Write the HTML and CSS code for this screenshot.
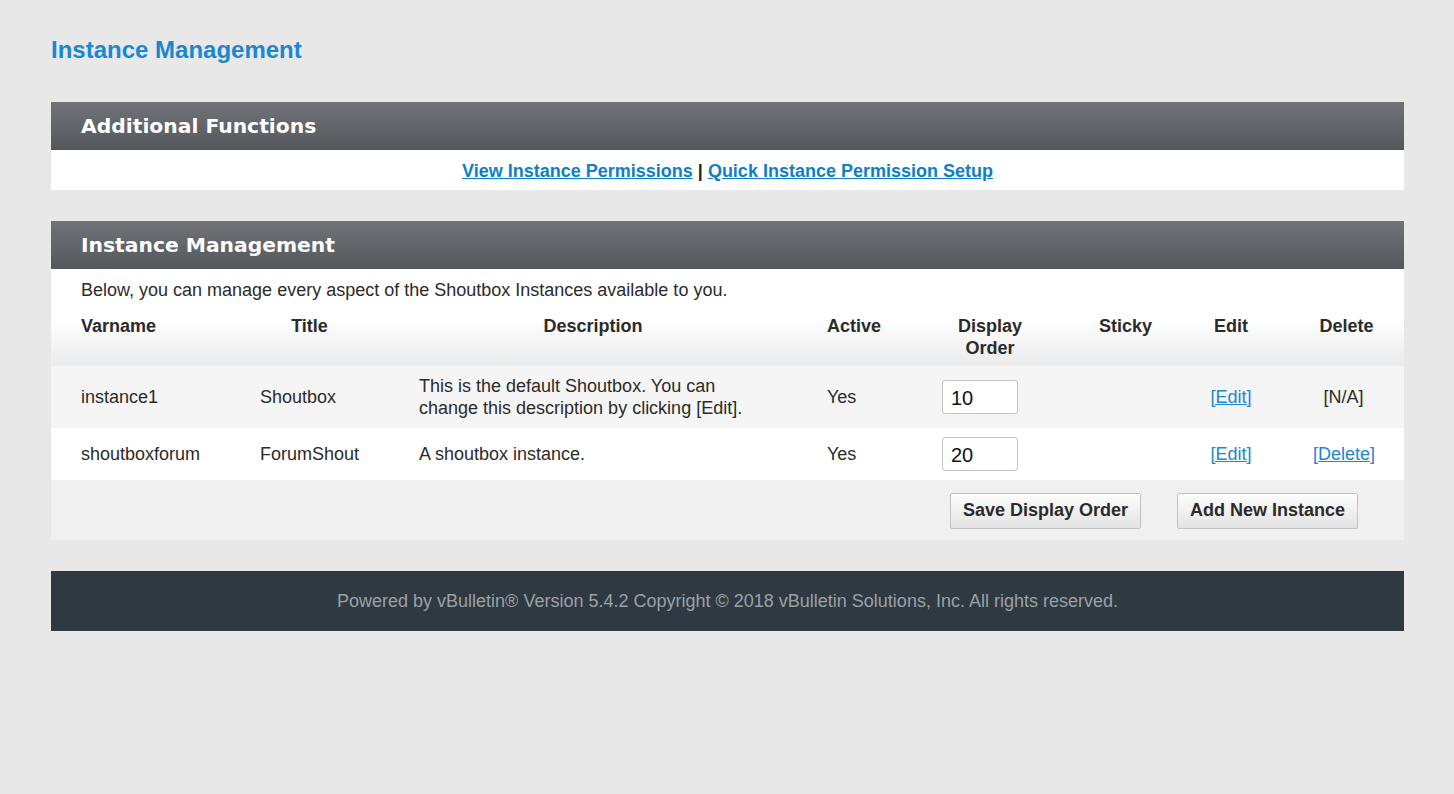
FILE: index.html
```html
<!DOCTYPE html>
<html>
<head>
<meta charset="utf-8">
<title>Instance Management</title>
<link rel="stylesheet" href="styles.css">
</head>
<body>
<div class="page">
  <h1 class="page-title">Instance Management</h1>

  <section class="panel">
    <h2 class="panel-head">Additional Functions</h2>
    <div class="links-row">
      <a href="#">View Instance Permissions</a> <span class="sep">|</span> <a href="#">Quick Instance Permission Setup</a>
    </div>
  </section>

  <section class="panel">
    <h2 class="panel-head">Instance Management</h2>
    <div class="intro-block">
      <p class="intro">Below, you can manage every aspect of the Shoutbox Instances available to you.</p>
      <table class="grid">
        <colgroup>
          <col class="c1"><col class="c2"><col class="c3"><col class="c4"><col class="c5"><col class="c6"><col class="c7"><col class="c8">
        </colgroup>
        <thead>
          <tr>
            <th class="left">Varname</th>
            <th>Title</th>
            <th>Description</th>
            <th>Active</th>
            <th>Display Order</th>
            <th>Sticky</th>
            <th>Edit</th>
            <th class="del">Delete</th>
          </tr>
        </thead>
        <tbody>
          <tr class="alt">
            <td>instance1</td>
            <td>Shoutbox</td>
            <td>This is the default Shoutbox. You can change this description by clicking [Edit].</td>
            <td>Yes</td>
            <td><input class="order" type="text" value="10"></td>
            <td></td>
            <td class="center"><a href="#">[Edit]</a></td>
            <td class="center">[N/A]</td>
          </tr>
          <tr>
            <td>shoutboxforum</td>
            <td>ForumShout</td>
            <td>A shoutbox instance.</td>
            <td>Yes</td>
            <td><input class="order" type="text" value="20"></td>
            <td></td>
            <td class="center"><a href="#">[Edit]</a></td>
            <td class="center"><a href="#">[Delete]</a></td>
          </tr>
        </tbody>
      </table>
    </div>
    <div class="actions">
      <button class="btn" type="button">Save Display Order</button>
      <button class="btn" type="button">Add New Instance</button>
    </div>
  </section>

  <footer class="footer">Powered by vBulletin® Version 5.4.2 Copyright © 2018 vBulletin Solutions, Inc. All rights reserved.</footer>
</div>
</body>
</html>
```

FILE: styles.css
```css
html, body {
  margin: 0;
  padding: 0;
  background: #e8e8e8;
}
body {
  font-family: "Liberation Sans", Arial, sans-serif;
  color: #2b2b2b;
  font-size: 18px;
}
.page {
  width: 1353px;
  margin-left: 51px;
  padding-top: 36px;
}
.page-title {
  margin: 0 0 38px 0;
  font-size: 24px;
  line-height: 28px;
  font-weight: bold;
  color: #1a87cf;
}
.panel {
  margin-bottom: 31px;
  background: #fff;
}
.panel-head {
  margin: 0;
  height: 48px;
  line-height: 48px;
  padding-left: 30px;
  font-family: "DejaVu Sans", sans-serif;
  font-size: 20.3px;
  font-weight: bold;
  color: #fff;
  background: linear-gradient(#707479, #54585d);
}
.links-row {
  height: 40px;
  line-height: 42px;
  text-align: center;
  font-size: 18px;
  font-weight: bold;
  color: #222;
}
.links-row a {
  color: #0f7fc4;
}
.intro-block {
  background: linear-gradient(#ffffff 0px, #ffffff 50px, #eaebec 96px, #eaebec 97px);
  background-repeat: no-repeat;
  background-size: 100% 97px;
}
.intro {
  margin: 0;
  padding: 10px 30px 0 30px;
  line-height: 22px;
}
.grid {
  width: 1353px;
  table-layout: fixed;
  border-collapse: collapse;
}
.c1 { width: 179px; }
.c2 { width: 159px; }
.c3 { width: 408px; }
.c4 { width: 114px; }
.c5 { width: 158px; }
.c6 { width: 110px; }
.c7 { width: 104px; }
.c8 { width: 121px; }
.grid th, .grid td {
  padding: 0 30px;
  line-height: 22px;
  vertical-align: middle;
}
.grid th {
  text-align: center;
  font-weight: bold;
  padding-top: 14px;
  padding-bottom: 7px;
  vertical-align: top;
}
.grid th.left {
  text-align: left;
}
.grid th.del {
  padding-left: 33px;
  padding-right: 27px;
}
.grid td {
  text-align: left;
  padding-top: 9px;
  padding-bottom: 9px;
  color: #2b2b2b;
}
.grid tbody tr {
  background: #fff;
}
.grid tbody tr.alt {
  background: #f5f5f5;
}
.grid td.center {
  text-align: center;
}
.grid td a {
  color: #1a87cf;
}
.order {
  box-sizing: border-box;
  width: 76px;
  height: 34px;
  margin-left: 1px;
  padding: 2px 8px 0 8px;
  border: 1px solid #c4c4c4;
  border-radius: 3px;
  background: #fff;
  font-family: "Liberation Sans", Arial, sans-serif;
  font-size: 20px;
  color: #111;
  display: block;
}
.actions {
  height: 60px;
  background: #f0f0f0;
  display: flex;
  justify-content: flex-end;
  align-items: center;
  gap: 36px;
  padding-right: 46px;
}
.btn {
  height: 36px;
  padding: 0 12px;
  margin-top: 1px;
  white-space: nowrap;
  border: 1px solid #c2c2c2;
  border-radius: 2px;
  background: linear-gradient(#fdfdfd, #e3e3e3);
  font-family: "Liberation Sans", Arial, sans-serif;
  font-size: 18px;
  font-weight: bold;
  color: #2b2b2b;
}
.footer {
  height: 60px;
  line-height: 60px;
  background: #2f3942;
  color: #9aa1a7;
  text-align: center;
  font-size: 18px;
}
```
